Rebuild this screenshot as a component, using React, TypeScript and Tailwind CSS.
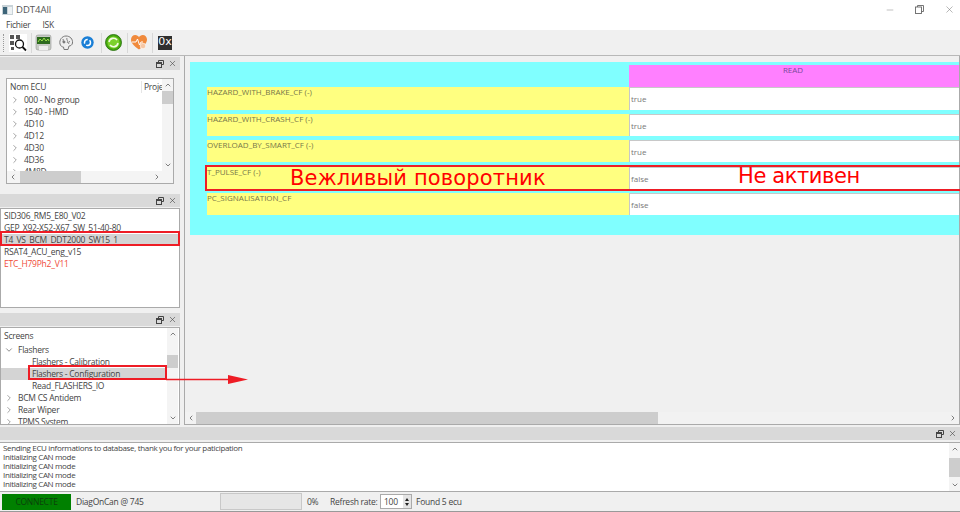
import { ChevronRight, ChevronDown, ChevronUp, ChevronLeft, Minus, X } from 'lucide-react';

const FONT = 'font-["Open_Sans","Noto_Sans",sans-serif]';

// dock title bar with float + close buttons
function DockTitle({ className = '' }: { className?: string }) {
  return (
    <div className={`h-[13px] bg-[#d9d9d9] flex items-center justify-end gap-[3px] pr-[2px] shrink-0 ${className}`}>
      <svg width="8" height="8" viewBox="0 0 8 8" fill="none" stroke="#444" strokeWidth="1">
        <path d="M2.5 2.5V.5h5v4H5.500" />
        <rect x=".5" y="2.500" width="5" height="5" />
        <path d="M.5 3.500h5" />
      </svg>
      <X size={9} strokeWidth={1.6} className="text-[#444] mx-[1px]" />
    </div>
  );
}

function VScroll({ thumbTop, thumbH, className = '' }: { thumbTop: string; thumbH: string; className?: string }) {
  return (
    <div className={`w-[11px] flex flex-col items-center bg-[#f4f4f4] shrink-0 ${className}`}>
      <div className="h-[12px] flex items-center"><ChevronUp size={8} strokeWidth={2} className="text-[#444]" /></div>
      <div className="flex-1 w-full">
        <div className={`bg-[#cdcdcd] w-full ${thumbTop} ${thumbH}`} />
      </div>
      <div className="h-[12px] flex items-center"><ChevronDown size={8} strokeWidth={2} className="text-[#444]" /></div>
    </div>
  );
}

function TreeRow({ label, open, indent = 0 }: { label: string; open?: boolean; indent?: number }) {
  return (
    <div className="h-[12px] flex items-center whitespace-nowrap">
      {indent === 0 && (
        <span className="w-[17px] pl-[3px] shrink-0">
          {open ? <ChevronDown size={10} strokeWidth={1.6} className="text-[#555]" /> : <ChevronRight size={10} strokeWidth={1.6} className="text-[#777]" />}
        </span>
      )}
      {indent > 0 && <span className="w-[31px] shrink-0" />}
      <span>{label}</span>
    </div>
  );
}

const rows = [
  { name: 'HAZARD_WITH_BRAKE_CF (-)', value: 'true', cls: 'h-[23px] mb-[4px]' },
  { name: 'HAZARD_WITH_CRASH_CF (-)', value: 'true', cls: 'h-[22px] mb-[4px]' },
  { name: 'OVERLOAD_BY_SMART_CF (-)', value: 'true', cls: 'h-[22px] mb-[5px]' },
  { name: 'T_PULSE_CF (-)', value: 'false', cls: 'h-[23px] mb-[3px]' },
  { name: 'PC_SIGNALISATION_CF', value: 'false', cls: 'h-[22px]' },
];

const toolSep = <div className="w-px h-[20px] bg-[#d8d8d8] shrink-0" />;

export default function App() {
  return (
    <div className={`relative w-[960px] h-[512px] overflow-hidden bg-[#f0f0f0] text-[8.5px] leading-[12px] tracking-[-0.25px] text-[#444] flex flex-col ${FONT}`}>
      {/* title bar */}
      <div className="h-[19px] bg-white flex items-center pl-[2px] shrink-0">
        <svg width="11" height="10" viewBox="0 0 11 10" className="shrink-0">
          <rect width="11" height="10" fill="#c9d3d8" />
          <rect x="1" y="2" width="4" height="7" fill="#3c6478" />
          <rect x="6" y="2" width="4" height="7" fill="#eef2f4" />
        </svg>
        <span className="ml-[3px] text-[9.5px] tracking-normal text-[#555]">DDT4All</span>
        <div className="ml-auto flex items-center gap-[20px] pr-[5px] text-[#666]">
          <Minus size={10} strokeWidth={1} />
          <svg width="9" height="9" viewBox="0 0 9 9" fill="none" stroke="#666" strokeWidth=".9">
            <rect x=".5" y="2" width="6" height="6.500" />
            <path d="M2.500 2V.5h6v6H6.500" />
          </svg>
          <X size={11} strokeWidth={1} />
        </div>
      </div>
      {/* menu */}
      <div className="h-[11px] bg-white flex items-center gap-[12px] pl-[6px] shrink-0 text-[8.5px]">
        <span>Fichier</span>
        <span>ISK</span>
      </div>
      {/* toolbar */}
      <div className="h-[25px] flex items-center pl-[3px] shrink-0 bg-[#f0f0f0]">
        <div className="w-px h-[18px] border-l border-dotted border-[#999] shrink-0" />
        <svg width="18" height="18" viewBox="0 0 18 18" className="ml-[5px] shrink-0">
          <rect width="18" height="18" fill="#fff" />
          <g fill="#555">
            <rect x="1" y="1" width="4" height="4" />
            <rect x="7" y="1" width="4" height="4" />
            <rect x="1" y="7" width="4" height="4" />
            <rect x="2" y="13" width="3" height="3" />
          </g>
          <circle cx="10.500" cy="10" r="4" fill="#fff" stroke="#111" strokeWidth="1.300" />
          <path d="M13.500 13l3.500 3.500" stroke="#111" strokeWidth="1.800" />
        </svg>
        <div className="ml-[4px]">{toolSep}</div>
        <svg width="17" height="17" viewBox="0 0 17 17" className="ml-[3px] shrink-0">
          <rect x="1" y="1" width="15" height="15" rx="2" fill="#c8cbc6" stroke="#888" strokeWidth=".5" />
          <rect x="2" y="3" width="13" height="7" fill="#2d6a1e" />
          <path d="M3 8l2-3 2 2 2-3 2 3 2-2 1 2" stroke="#9ce04d" strokeWidth="1" fill="none" />
          <rect x="4" y="12" width="9" height="4" fill="#eee" />
        </svg>
        <svg width="16" height="16" viewBox="0 0 16 16" className="ml-[6px] shrink-0" fill="none" stroke="#777" strokeWidth="1">
          <path d="M2 9C1 5 4 1 8 1s7 3 6.500 7c-.3 2-2 3-3.500 3l-1 3.500H6L5.500 12C4 12 2.500 11 2 9z" fill="#eee" />
          <path d="M5 4c1 2-1 3 1 4M9 3c-1 2 2 3 0 5M12 6c-1 1-2 2-1 3" />
          <circle cx="6" cy="7" r="1" fill="#777" />
        </svg>
        <svg width="13" height="13" viewBox="0 0 13 13" className="ml-[7px] shrink-0">
          <circle cx="6.500" cy="6.500" r="6.200" fill="#1a7fd6" />
          <circle cx="6.500" cy="6.500" r="3" fill="none" stroke="#fff" strokeWidth="1.500" strokeDasharray="6 2" />
        </svg>
        <div className="ml-[7px]">{toolSep}</div>
        <svg width="17" height="17" viewBox="0 0 17 17" className="ml-[3px] shrink-0">
          <circle cx="8.500" cy="8.500" r="8" fill="#47a80f" stroke="#1f6a08" strokeWidth=".8" />
          <circle cx="8.500" cy="8.500" r="6" fill="#7cd12c" />
          <path d="M4 8a4.500 4.500 0 0 1 8-2M13 9a4.500 4.500 0 0 1-8 2" fill="none" stroke="#f1fbe4" strokeWidth="1.600" />
        </svg>
        <div className="ml-[5px]">{toolSep}</div>
        <svg width="16" height="15" viewBox="0 0 16 15" className="ml-[3px] shrink-0">
          <path d="M8 14.500C3 11 0 8 0 4.500 0 2 2 0 4.200 0 6 0 7.300 1 8 2.200 8.700 1 10 0 11.800 0 14 0 16 2 16 4.500 16 8 13 11 8 14.500z" fill="#f08a3c" />
          <path d="M1 7h4l1.500-3 2 6 1.500-3h2" fill="none" stroke="#fff" strokeWidth="1" />
          <circle cx="12" cy="11" r="2.800" fill="#f6c7a4" stroke="#fff" strokeWidth=".6" />
        </svg>
        <div className="ml-[5px]">{toolSep}</div>
        <div className="ml-[5px] w-[14px] h-[14px] bg-[#2f2f2f] text-white text-[11px] leading-[16px] tracking-normal flex items-end justify-center shrink-0 overflow-hidden font-['DejaVu_Sans',sans-serif]">0x</div>
      </div>

      {/* docks + central view */}
      <div className="h-[370px] flex shrink-0 gap-[4px] border-t border-[#b8b8b8]">
        <div className="w-[180px] flex flex-col shrink-0">
          {/* ECU tree dock */}
          <DockTitle className="mt-[1px]" />
          <div className="h-[124px] pt-[8px] px-[6px] pb-[10px] shrink-0">
            <div className="h-[106px] border border-[#aaa] bg-white flex flex-col">
              <div className="flex-1 flex min-h-0">
                <div className="flex-1 min-w-0 overflow-hidden">
                  <div className="h-[15px] flex items-center justify-between pl-[3px]">
                    <span>Nom ECU</span>
                    <span className="w-[21px] border-l border-[#e5e5e5] pl-[2px] overflow-hidden whitespace-nowrap">Proje</span>
                  </div>
                  <div className="overflow-hidden h-[77px]">
                    {['000 - No group', '1540 - HMD', '4D10', '4D12', '4D30', '4D36', '4M8D'].map(l => <TreeRow key={l} label={l} />)}
                  </div>
                </div>
                <VScroll thumbTop="mt-0" thumbH="h-[13px]" />
              </div>
              <div className="h-[12px] flex items-center bg-[#f4f4f4] shrink-0">
                <ChevronLeft size={8} strokeWidth={2} className="ml-[2px] text-[#444]" />
                <div className="ml-[3px] w-[61px] h-full bg-[#cdcdcd]" />
                <ChevronRight size={8} strokeWidth={2} className="ml-[72px] text-[#444]" />
              </div>
            </div>
          </div>
          {/* loaded files dock */}
          <DockTitle />
          <div className="h-[100px] mt-[1px] mb-[5px] border border-[#aaa] bg-white pt-[1px] shrink-0">
            {['SID306_RM5_E80_V02', 'GEP_X92-X52-X67_SW_51-40-80'].map(l => (
              <div key={l} className="h-[12px] flex items-center pl-[3px]">{l}</div>
            ))}
            <div className="h-[12px] flex items-center pl-[3px] bg-[#d4d4d4]">T4_VS_BCM_DDT2000_SW15_1</div>
            <div className="h-[12px] flex items-center pl-[3px]">RSAT4_ACU_eng_v15</div>
            <div className="h-[12px] flex items-center pl-[3px] text-[#f04a3a]">ETC_H79Ph2_V11</div>
          </div>
          {/* screens dock */}
          <DockTitle />
          <div className="flex-1 min-h-0 mt-[1px] border border-[#aaa] bg-white flex overflow-hidden">
            <div className="flex-1 min-w-0 pt-[2px] pl-[3px] overflow-hidden">
              <div className="h-[12px] flex items-center">Screens</div>
              <div className="h-[2px]" />
              <div className="-ml-[3px]">
                <TreeRow label="Flashers" open />
                <TreeRow label="Flashers - Calibration" indent={1} />
                <div className="bg-[#d4d4d4]"><TreeRow label="Flashers - Configuration" indent={1} /></div>
                <TreeRow label="Read_FLASHERS_IO" indent={1} />
                <TreeRow label="BCM CS Antidem" />
                <TreeRow label="Rear Wiper" />
                <TreeRow label="TPMS System" />
              </div>
            </div>
            <VScroll thumbTop="mt-[15px]" thumbH="h-[13px]" className="mr-[1px]" />
          </div>
        </div>

        {/* central scroll area */}
        <div className="flex-1 min-w-0 border-l border-r border-b border-[#aaa] flex flex-col text-[#666]">
          <div className="flex-1 min-h-0 pt-[6px] pl-[5px]">
            <div className="h-[173px] bg-[#80ffff] pt-[3px] pl-[17px]">
              <div className="h-[22px] ml-[422px] bg-[#ff80ff] text-center text-[8px] leading-[10px] tracking-normal text-[#7a4a9a] pr-[2px]">READ</div>
              {rows.map(r => (
                <div key={r.name} className={`flex ${r.cls}`}>
                  <div className="w-[422px] bg-[#ffff80] text-[8px] leading-[10px] tracking-normal text-[#77774a] shrink-0">{r.name}</div>
                  <div className="flex-1 bg-white border-l border-t border-[#c8c8c8] pl-[1px] flex items-center text-[8px] tracking-normal text-[#777]">{r.value}</div>
                </div>
              ))}
            </div>
          </div>
          <div className="h-[12px] flex items-center bg-[#f2f2f2] shrink-0">
            <ChevronLeft size={8} strokeWidth={2} className="ml-[2px] text-[#444]" />
            <div className="ml-[1px] w-[462px] h-full bg-[#cdcdcd]" />
            <ChevronRight size={8} strokeWidth={2} className="ml-auto mr-[2px] text-[#444]" />
          </div>
        </div>
      </div>

      {/* log dock */}
      <DockTitle className="mt-[2px]" />
      <div className="h-[50px] mt-[2px] border-t border-b border-[#aaa] bg-white flex shrink-0">
        <div className="flex-1 pl-[3px] text-[8px] leading-[9px] tracking-[-0.34px]">
          <div>Sending ECU informations to database, thank you for your paticipation</div>
          <div>Initializing CAN mode</div>
          <div>Initializing CAN mode</div>
          <div>Initializing CAN mode</div>
          <div>Initializing CAN mode</div>
        </div>
        <VScroll thumbTop="mt-[3px]" thumbH="h-[19px]" />
      </div>

      {/* status bar */}
      <div className="flex-1 min-h-0 flex items-center pl-[2px] border-b border-[#999] whitespace-nowrap">
        <div className="w-[69px] h-[16px] bg-[#008000] text-[#0b3f0b] flex items-center justify-center text-[8.5px] shrink-0">CONNECTE</div>
        <span className="ml-[5px] w-[144px] shrink-0">DiagOnCan @ 745</span>
        <div className="w-[82px] h-[17px] bg-[#e6e6e6] border border-[#c8c8c8] shrink-0" />
        <span className="ml-[5px] w-[23px] shrink-0">0%</span>
        <span className="w-[50px] shrink-0">Refresh rate:</span>
        <div className="w-[32px] h-[15px] border border-[#aaa] bg-white flex items-center pl-[3px] shrink-0">
          <span className="flex-1">100</span>
          <div className="w-[8px] h-full bg-[#e4e4e4] flex flex-col items-center justify-center text-[#222]">
            <div className="w-0 h-0 border-x-[2px] border-x-transparent border-b-[3px] border-b-[#222] mb-[2px]" />
            <div className="w-0 h-0 border-x-[2px] border-x-transparent border-t-[3px] border-t-[#222]" />
          </div>
        </div>
        <span className="ml-[4px]">Found 5 ecu</span>
      </div>

      {/* red annotations drawn over the screenshot */}
      <div className="absolute left-0 top-[231px] w-[180px] h-[15px] border-2 border-[#ee1c25]" />
      <div className="absolute left-[28px] top-[365px] w-[139px] h-[15px] border-2 border-[#ee1c25]" />
      <div className="absolute left-[205px] top-[165px] w-[760px] h-[26px] border-2 border-[#ee1c25]" />
      <div className="absolute left-[290px] top-[165px] text-[21px] leading-[26px] tracking-[0.15px] text-[#ff0000] whitespace-nowrap font-['DejaVu_Sans',sans-serif]">Вежливый поворотник</div>
      <div className="absolute left-[738px] top-[163px] text-[21px] leading-[26px] tracking-[-0.4px] text-[#ff0000] whitespace-nowrap font-['DejaVu_Sans',sans-serif]">Не активен</div>
      <svg className="absolute left-[166px] top-[372px]" width="84" height="14" viewBox="0 0 84 14">
        <path d="M0 7.500h66" stroke="#ee1c25" strokeWidth="1.500" />
        <path d="M62 3l20 4.500L62 12z" fill="#ee1c25" />
      </svg>
    </div>
  );
}
